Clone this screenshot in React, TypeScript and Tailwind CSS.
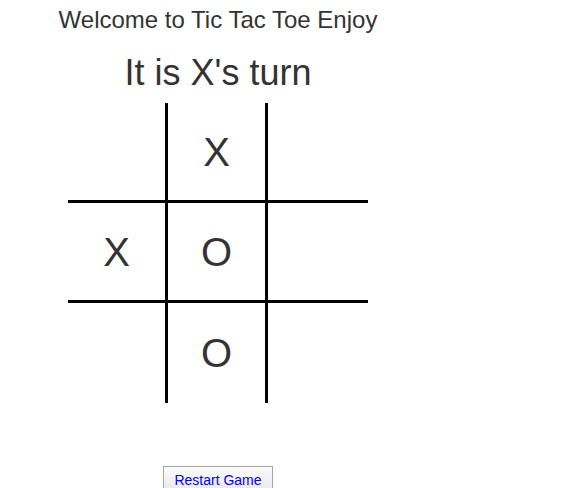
const board = ['', 'X', '', 'X', 'O', '', '', 'O', ''];

export default function App() {
  return (
    <div
      className="flex w-[436px] flex-col items-center bg-white text-[#333]"
      style={{ fontFamily: '"Liberation Sans", Arial, sans-serif' }}
    >
      <h1 className="mt-[7px] whitespace-nowrap text-[24px] leading-[26px]">Welcome to Tic Tac Toe Enjoy</h1>
      <h2 className="mt-[20px] whitespace-nowrap text-[36px] leading-[40px]">It is X's turn</h2>

      <div className="mt-[10px] grid w-[300px] grid-cols-3">
        {board.map((mark, i) => (
          <div
            key={i}
            className={`flex h-[100px] items-center justify-center border-black text-[40px] ${
              i % 3 !== 2 ? 'border-r-[3px]' : ''
            } ${i < 6 ? 'border-b-[3px]' : ''}`}
          >
            {mark}
          </div>
        ))}
      </div>

      <button className="mt-[63px] w-[110px] border border-[#a6a6a6] bg-gradient-to-b from-[#fbfbfb] to-[#e9e9e9] pt-[5px] pb-[3px] text-[14px] leading-[16px] text-[#0000ff]">
        Restart Game
      </button>
    </div>
  );
}
